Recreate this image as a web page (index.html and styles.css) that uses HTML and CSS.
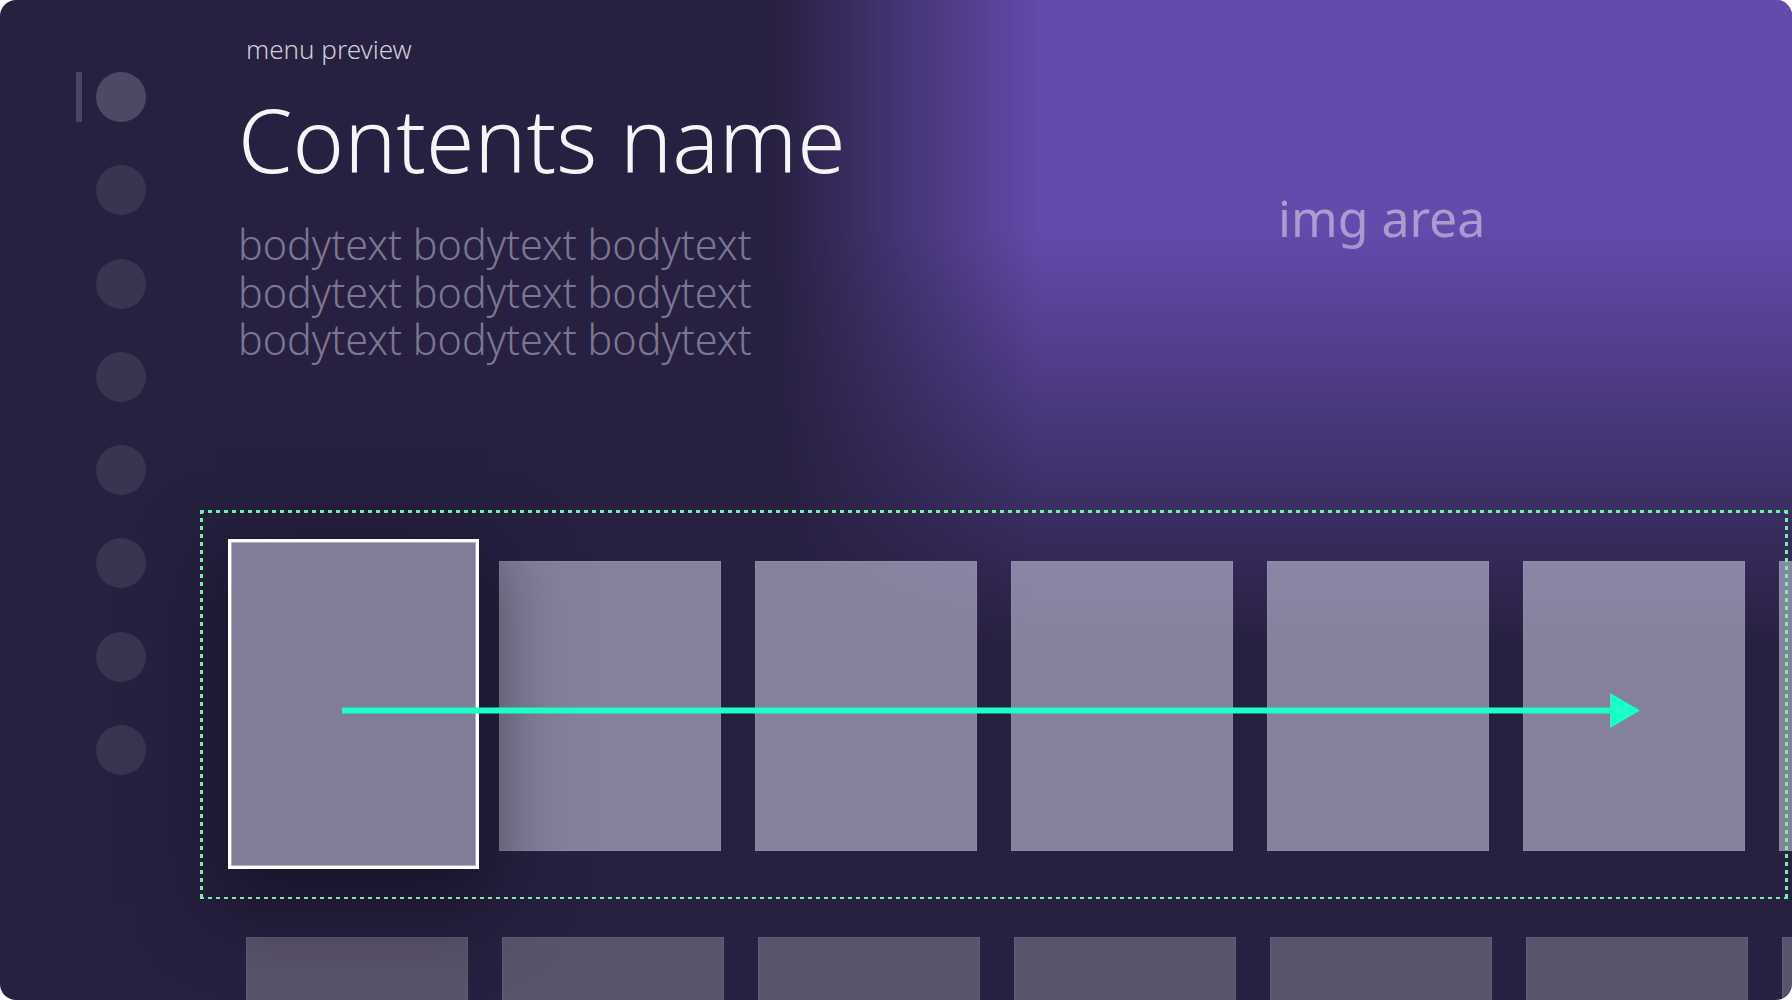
FILE: index.html
```html
<!DOCTYPE html>
<html lang="en">
<head>
<meta charset="utf-8">
<title>menu preview</title>
<link rel="stylesheet" href="styles.css">
</head>
<body>
<div class="screen">
  <div class="hero">
    <div class="hero-fade">
      <span class="hero-label">img area</span>
    </div>
  </div>

  <nav class="sidebar">
    <div class="nav-item nav-item-active"><span class="nav-indicator"></span><span class="nav-dot nav-dot-active"></span></div>
    <div class="nav-item"><span class="nav-dot"></span></div>
    <div class="nav-item"><span class="nav-dot"></span></div>
    <div class="nav-item"><span class="nav-dot"></span></div>
    <div class="nav-item"><span class="nav-dot"></span></div>
    <div class="nav-item"><span class="nav-dot"></span></div>
    <div class="nav-item"><span class="nav-dot"></span></div>
    <div class="nav-item"><span class="nav-dot"></span></div>
  </nav>

  <main class="main">
    <header class="header">
      <p class="eyebrow">menu preview</p>
      <h1 class="title">Contents name</h1>
      <p class="body-text">bodytext bodytext bodytext<br>bodytext bodytext bodytext<br>bodytext bodytext bodytext</p>
    </header>

    <section class="rail">
      <div class="card card-focused"></div>
      <div class="card"></div>
      <div class="card"></div>
      <div class="card"></div>
      <div class="card"></div>
      <div class="card"></div>
      <div class="card"></div>
      <svg class="rail-arrow" width="1298" height="35" viewBox="0 0 1298 35" aria-hidden="true">
        <rect x="0" y="14.5" width="1270" height="6" fill="#19ffc7"/>
        <polygon points="1268,0 1298,17.5 1268,35" fill="#19ffc7"/>
      </svg>
    </section>

    <section class="row-next">
      <div class="card card-dim"></div>
      <div class="card card-dim"></div>
      <div class="card card-dim"></div>
      <div class="card card-dim"></div>
      <div class="card card-dim"></div>
      <div class="card card-dim"></div>
      <div class="card card-dim"></div>
    </section>
  </main>
</div>
</body>
</html>
```

FILE: styles.css
```css
* {
  box-sizing: border-box;
}

html, body {
  margin: 0;
  padding: 0;
  background: #ffffff;
}

body {
  font-family: "Noto Sans", "Open Sans", "Liberation Sans", sans-serif;
}

.screen {
  position: relative;
  width: 1792px;
  height: 1000px;
  overflow: hidden;
  border-radius: 16px;
  background: #272040;
  display: flex;
}

/* background image area (under content) */
.hero {
  position: absolute;
  top: 0;
  right: 0;
  left: 770px;
  height: 660px;
  z-index: 0;
  -webkit-mask-image: linear-gradient(to right, transparent 0, #000 270px);
  mask-image: linear-gradient(to right, transparent 0, #000 270px);
}

.hero-fade {
  width: 100%;
  height: 100%;
  background: #644aab;
  -webkit-mask-image: linear-gradient(to bottom, #000 230px, transparent 650px);
  mask-image: linear-gradient(to bottom, #000 230px, transparent 650px);
  padding: 188px 0 0 508px;
}

.hero-label {
  display: block;
  font-size: 50px;
  line-height: 60px;
  font-weight: 400;
  color: rgba(255, 255, 255, 0.45);
}

/* sidebar */
.sidebar {
  position: relative;
  z-index: 1;
  flex: 0 0 200px;
  display: flex;
  flex-direction: column;
  gap: 43.3px;
  padding: 72px 0 0 76px;
}

.nav-item {
  display: flex;
  align-items: center;
  gap: 14px;
  padding-left: 20px;
}

.nav-item-active {
  padding-left: 0;
}

.nav-indicator {
  width: 6px;
  height: 50px;
  background: #4b4562;
}

.nav-dot {
  width: 50px;
  height: 50px;
  border-radius: 50%;
  background: #3a3450;
}

.nav-dot-active {
  background: #4e4864;
}

/* main column */
.main {
  position: relative;
  z-index: 1;
  flex: 1;
  min-width: 0;
  display: flex;
  flex-direction: column;
}

.header {
  height: 510px;
  flex-shrink: 0;
  padding: 33px 0 0 38px;
}

.eyebrow {
  margin: 0 0 0 8px;
  font-size: 26px;
  line-height: 32px;
  font-weight: 300;
  color: rgba(255, 255, 255, 0.78);
}

.title {
  margin: 21.5px 0 0;
  font-size: 87.5px;
  line-height: 104px;
  font-weight: 300;
  color: #f5f4f8;
}

.body-text {
  margin: 30.5px 0 0;
  font-size: 41.3px;
  line-height: 47.5px;
  font-weight: 300;
  color: #7b7692;
}

/* focused rail */
.rail {
  position: relative;
  flex-shrink: 0;
  width: 1588px;
  height: 389px;
  display: flex;
  gap: 34px;
  padding: 51px 0 0 43px;
}

.rail::after {
  content: "";
  position: absolute;
  inset: 0;
  z-index: 4;
  pointer-events: none;
  background:
    repeating-linear-gradient(90deg, #6df59f 0 4px, transparent 4px 8px) left top / 100% 3px no-repeat,
    repeating-linear-gradient(90deg, #6df59f 0 4px, transparent 4px 8px) left bottom / 100% 2px no-repeat,
    repeating-linear-gradient(180deg, #6df59f 0 4px, transparent 4px 8px) left top / 3px 100% no-repeat,
    repeating-linear-gradient(180deg, #6df59f 0 4px, transparent 4px 8px) right top / 3px 100% no-repeat;
}

.card {
  flex: 0 0 222px;
  height: 290px;
  background: rgba(236, 236, 255, 0.48);
  box-shadow: inset 0 0 0 1px rgba(255, 255, 255, 0.06);
}

.card-focused {
  position: relative;
  z-index: 2;
  flex: 0 0 251px;
  height: 330px;
  margin: -22px -14px 0 -15px;
  background: #807d99;
  border: 3px solid #ffffff;
  box-shadow:
    inset 0 0 0 1px rgba(190, 188, 210, 0.8),
    0 26px 70px 14px rgba(14, 11, 28, 0.55);
}

.rail-arrow {
  position: absolute;
  left: 142px;
  top: 182.5px;
  z-index: 3;
}

/* next row */
.row-next {
  flex-shrink: 0;
  display: flex;
  gap: 34px;
  margin-top: 38px;
  padding-left: 46px;
}

.card-dim {
  height: 120px;
  background: rgba(255, 255, 255, 0.23);
}
```
